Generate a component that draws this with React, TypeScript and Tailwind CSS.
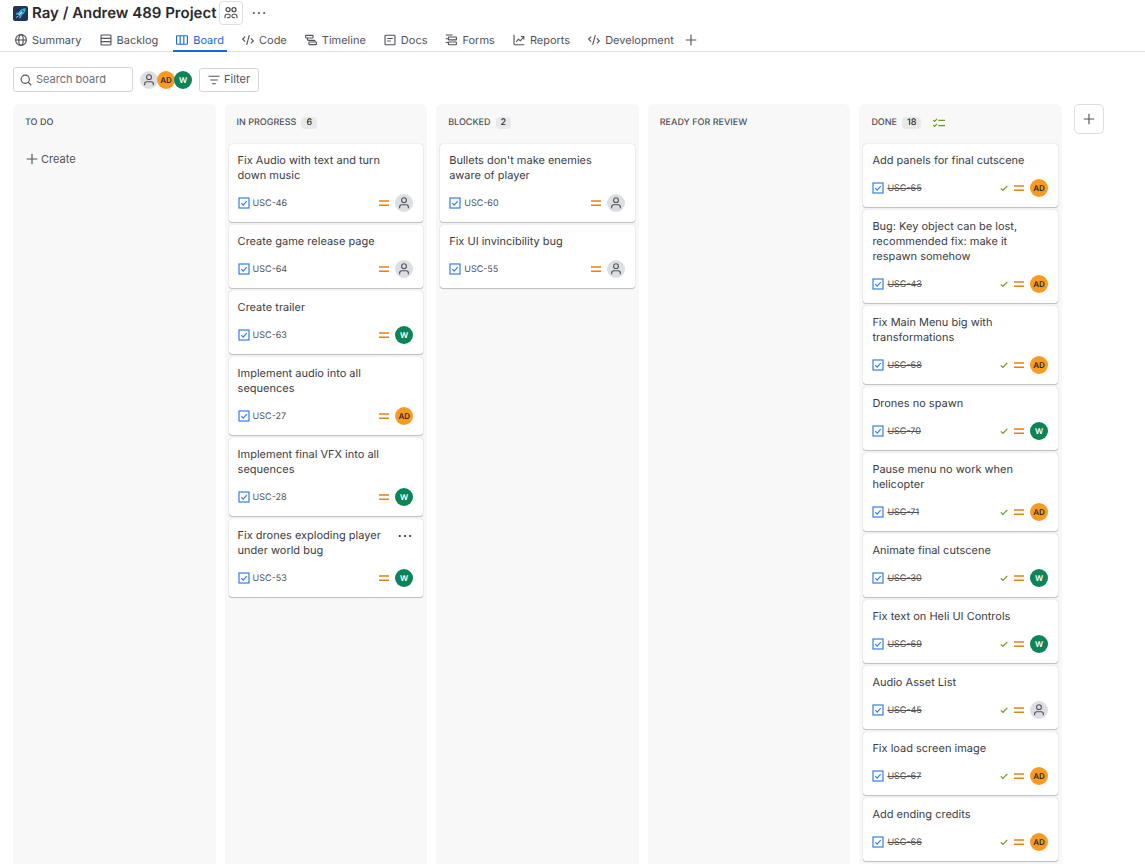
import type { ReactNode } from "react";

type Person = "none" | "AD" | "W";

interface Task {
  title: string;
  id: string;
  who: Person;
  menu?: boolean;
}

interface ColumnData {
  name: string;
  count?: number;
  done?: boolean;
  create?: boolean;
  tasks: Task[];
}

const COLUMNS: ColumnData[] = [
  { name: "TO DO", create: true, tasks: [] },
  {
    name: "IN PROGRESS",
    count: 6,
    tasks: [
      { title: "Fix Audio with text and turn down music", id: "USC-46", who: "none" },
      { title: "Create game release page", id: "USC-64", who: "none" },
      { title: "Create trailer", id: "USC-63", who: "W" },
      { title: "Implement audio into all sequences", id: "USC-27", who: "AD" },
      { title: "Implement final VFX into all sequences", id: "USC-28", who: "W" },
      { title: "Fix drones exploding player under world bug", id: "USC-53", who: "W", menu: true },
    ],
  },
  {
    name: "BLOCKED",
    count: 2,
    tasks: [
      { title: "Bullets don't make enemies aware of player", id: "USC-60", who: "none" },
      { title: "Fix UI invincibility bug", id: "USC-55", who: "none" },
    ],
  },
  { name: "READY FOR REVIEW", tasks: [] },
  {
    name: "DONE",
    count: 18,
    done: true,
    tasks: [
      { title: "Add panels for final cutscene", id: "USC-65", who: "AD" },
      { title: "Bug: Key object can be lost, recommended fix: make it respawn somehow", id: "USC-43", who: "AD" },
      { title: "Fix Main Menu big with transformations", id: "USC-68", who: "AD" },
      { title: "Drones no spawn", id: "USC-70", who: "W" },
      { title: "Pause menu no work when helicopter", id: "USC-71", who: "AD" },
      { title: "Animate final cutscene", id: "USC-30", who: "W" },
      { title: "Fix text on Heli UI Controls", id: "USC-69", who: "W" },
      { title: "Audio Asset List", id: "USC-45", who: "none" },
      { title: "Fix load screen image", id: "USC-67", who: "AD" },
      { title: "Add ending credits", id: "USC-66", who: "AD" },
    ],
  },
];

function Icon({ children, className = "size-3" }: { children: ReactNode; className?: string }) {
  return (
    <svg
      viewBox="0 0 16 16"
      className={`shrink-0 ${className}`}
      fill="none"
      stroke="currentColor"
      strokeWidth="1.5"
      aria-hidden="true"
    >
      {children}
    </svg>
  );
}

const codeIcon = <path d="M4.2 3.5 1 6.8l3.2 3.3M11.8 5.9 15 9.2l-3.2 3.3M9.8 1.5 6.2 14.5" />;

const TABS: { label: string; icon: ReactNode; active?: boolean }[] = [
  {
    label: "Summary",
    icon: (
      <>
        <circle cx="8" cy="8" r="7.2" />
        <ellipse cx="8" cy="8" rx="3" ry="7.2" />
        <path d="M1 8h14" />
      </>
    ),
  },
  {
    label: "Backlog",
    icon: (
      <>
        <rect x="1.4" y="1.4" width="13.2" height="13.2" rx="1" />
        <path d="M1.4 5.8h13.2M1.4 10.2h13.2" />
      </>
    ),
  },
  {
    label: "Board",
    active: true,
    icon: (
      <>
        <rect x="0.8" y="2.4" width="14.4" height="11.2" rx="1" />
        <path d="M5.6 2.5v11M10.4 2.5v11" />
      </>
    ),
  },
  { label: "Code", icon: codeIcon },
  {
    label: "Timeline",
    icon: (
      <>
        <rect x="0.8" y="1.8" width="10" height="3.6" rx="1" />
        <path d="M3.4 5.4v1.8c0 .8.5 1.3 1.3 1.3h7.5c.8 0 1.3.5 1.3 1.3v.6" />
        <rect x="5.2" y="10.6" width="10" height="3.6" rx="1" />
      </>
    ),
  },
  {
    label: "Docs",
    icon: (
      <>
        <rect x="1.4" y="1.6" width="13.2" height="12.8" rx="1" />
        <path d="M4.2 6h7.6M4.2 9.4h4.8" />
      </>
    ),
  },
  {
    label: "Forms",
    icon: (
      <>
        <path d="M1 1.4h9M1 6.4h3M1 11.4h3" />
        <rect x="4.6" y="4" width="10.6" height="3.8" rx="0.6" />
        <rect x="4.6" y="10.6" width="10.6" height="3.8" rx="0.6" />
      </>
    ),
  },
  {
    label: "Reports",
    icon: (
      <>
        <path d="M1.4 1v12.2c0 .7.4 1.1 1.1 1.1H15" />
        <path d="m4.2 10.6 3-3.6 2.6 2 4.2-5M10.4 3.4h4v4" />
      </>
    ),
  },
  { label: "Development", icon: codeIcon },
];

function PersonGlyph() {
  return (
    <Icon>
      <circle cx="8" cy="4.2" r="3.2" />
      <path d="M2.2 15v-1.6c0-1.7 1.2-3 2.9-3h5.8c1.7 0 2.9 1.3 2.9 3V15" />
    </Icon>
  );
}

const AVATAR_STYLES: Record<Person, string> = {
  none: "bg-[#dddee1] text-[#505258]",
  AD: "bg-[#fb9a22] text-[#292a2e]",
  W: "bg-[#0b8458] text-white",
};

function Avatar({ who }: { who: Person }) {
  return (
    <span
      className={`flex size-[18px] shrink-0 items-center justify-center rounded-full text-[8px] font-semibold ${AVATAR_STYLES[who]}`}
    >
      {who === "none" ? <PersonGlyph /> : who}
    </span>
  );
}

function Dots() {
  return (
    <svg viewBox="0 0 16 16" className="size-4" fill="currentColor" aria-hidden="true">
      <circle cx="2.8" cy="8" r="1.1" />
      <circle cx="8" cy="8" r="1.1" />
      <circle cx="13.2" cy="8" r="1.1" />
    </svg>
  );
}

function Plus() {
  return (
    <Icon>
      <path d="M8 1v14M1 8h14" />
    </Icon>
  );
}

function Card({ task, done }: { task: Task; done?: boolean }) {
  return (
    <article className="flex flex-col gap-[11px] rounded-[3px] bg-white pb-[10px] pl-[9px] pr-[10px] pt-[9px] shadow-[0_1px_1px_#1e1f2140,0_0_1px_#1e1f214f]">
      <div className="flex items-start">
        <h3 className="min-w-0 flex-1 pr-1 text-[11px] leading-[15px] text-[#3b3c42]">{task.title}</h3>
        <div className="flex w-4 shrink-0 justify-center">
          {task.menu && (
            <button type="button" aria-label="Card actions" className="text-[#292a2e]">
              <Dots />
            </button>
          )}
        </div>
      </div>
      <div className="flex h-[18px] items-center">
        <svg viewBox="0 0 12 12" className="size-3 shrink-0" fill="none" stroke="#357de8" strokeWidth="1.2" aria-hidden="true">
          <rect x="1" y="1" width="10" height="10" />
          <path d="m3.3 6.2 1.9 1.9 3.5-4" />
        </svg>
        <a
          href="#"
          className={`ml-[3px] pt-px text-[9px] leading-[15px] text-[#505258] ${done ? "line-through" : ""}`}
        >
          {task.id}
        </a>
        <div className="ml-auto flex items-center">
          {done && (
            <svg viewBox="0 0 8 8" className="mr-1.5 size-2" fill="none" stroke="#6a9a23" strokeWidth="1.2" aria-hidden="true">
              <path d="m0.8 4.4 2.1 2.1 4.4-4.7" />
            </svg>
          )}
          <svg viewBox="0 0 10 10" className="mr-1.5 size-2.5" stroke="#e97f17" strokeWidth="1.4" aria-hidden="true">
            <path d="M0 3h10M0 7.2h10" />
          </svg>
          <Avatar who={task.who} />
        </div>
      </div>
    </article>
  );
}

function Column({ column }: { column: ColumnData }) {
  return (
    <section className="min-w-0 flex-1 rounded-t-md bg-[#f8f8f8] px-1">
      <header className="flex h-10 items-center px-2 pb-[3px]">
        <h2 className="text-[9px] font-medium leading-3 text-[#505258]">{column.name}</h2>
        {column.count !== undefined && (
          <span className="ml-[5px] rounded-sm bg-[#e9e9eb] px-[5px] text-[9px] font-medium leading-3 text-[#292a2e]">
            {column.count}
          </span>
        )}
        {column.done && (
          <svg viewBox="0 0 12 10" className="ml-3 h-2.5 w-3" fill="none" stroke="#6a9a23" strokeWidth="1.2" aria-label="Done column">
            <path d="m0.4 2.2 1.2 1.2L4 0.8M0.4 7.2l1.2 1.2L4 5.8M5.4 2.4H12M5.4 7.6H12" />
          </svg>
        )}
      </header>
      {column.create && (
        <button type="button" className="flex h-[30px] items-center gap-[3px] px-[9px] text-[11px] text-[#505258]">
          <Plus />
          Create
        </button>
      )}
      <div className="flex flex-col gap-[3px]">
        {column.tasks.map((task) => (
          <Card key={task.id} task={task} done={column.done} />
        ))}
      </div>
    </section>
  );
}

export default function App() {
  return (
    <div className="flex h-screen flex-col overflow-hidden bg-white font-['Inter','Liberation_Sans',sans-serif] text-[#292a2e] [text-rendering:geometricPrecision]">
      <header className="shrink-0 border-b border-[#dddee1]">
        <div className="flex h-[26px] items-center pl-[13px]">
          <svg viewBox="0 0 15 15" className="size-[15px]" aria-hidden="true">
            <rect width="15" height="15" rx="2" fill="#223558" />
            <path d="M12.8 2.2c-3 0-5.3 1.3-7 4.1L3.4 7l-.8 1.8 2.2-.2 1.7 1.7-.3 2.3 1.8-1 .6-2.3c2.8-1.8 4-4 4.2-7.1Z" fill="#36b4dc" />
            <path d="m6 8.8 4.6-4.6" stroke="#dff5fc" strokeWidth="1" />
            <circle cx="9.8" cy="5.2" r="1.1" fill="#1d5f92" />
            <path d="m4.7 9.7-2.2 2.7 2.9-1.9Z" fill="#c9e8ef" />
          </svg>
          <h1 className="ml-1 text-[15px] font-semibold leading-5">Ray / Andrew 489 Project</h1>
          <button
            type="button"
            aria-label="Team"
            className="ml-[3px] flex size-6 items-center justify-center rounded border border-[#dddee1] text-[#505258]"
          >
            <Icon className="size-3.5">
              <circle cx="4.6" cy="4.2" r="2.3" />
              <circle cx="11.4" cy="4.2" r="2.3" />
              <path
                d="M1.2 14v-2.2c0-1.400 1-2.400 2.300-2.400h1.600c1.200 0 1.900.8 1.900 1.900 0 1.200-.8 2-2 2H3.600M14.800 14v-2.200c0-1.400-1-2.400-2.300-2.400h-1.600c-1.200 0-1.900.8-1.900 1.900 0 1.200.8 2 2 2h1.400"
                strokeWidth="1.3"
              />
            </Icon>
          </button>
          <button type="button" aria-label="More actions" className="ml-2 text-[#505258]">
            <Dots />
          </button>
        </div>
        <nav className="-mb-px flex h-[26px] items-stretch gap-3 pl-3" aria-label="Project views">
          {TABS.map((tab) => (
            <a
              key={tab.label}
              href="#"
              aria-current={tab.active ? "page" : undefined}
              className={`flex items-center gap-[5px] border-b-2 px-[3px] pt-1 text-[11px] leading-4 ${
                tab.active ? "border-[#1868db] text-[#1868db]" : "border-transparent text-[#505258]"
              }`}
            >
              <Icon>{tab.icon}</Icon>
              {tab.label}
            </a>
          ))}
          <button type="button" aria-label="Add view" className="-ml-1 flex items-center pt-0.5 text-[#505258]">
            <Plus />
          </button>
        </nav>
      </header>

      <div className="flex shrink-0 items-center px-[13px] pb-3 pt-[15px]">
        <label className="flex h-[25px] w-[120px] items-center gap-1 rounded-[3px] border border-[#d5d6d9] px-1.5 text-[#505258]">
          <Icon>
            <circle cx="7" cy="7" r="5.5" />
            <path d="m11 11 4 4" />
          </Icon>
          <input
            type="search"
            aria-label="Search board"
            placeholder="Search board"
            className="min-w-0 flex-1 bg-transparent text-[11px] outline-none placeholder:text-[#6b6e76]"
          />
        </label>
        <div className="ml-[7px] flex items-center -space-x-px">
          <Avatar who="none" />
          <Avatar who="AD" />
          <Avatar who="W" />
        </div>
        <button
          type="button"
          className="ml-[7px] flex h-6 items-center gap-1 rounded-[3px] border border-[#d5d6d9] px-2 text-[11px] text-[#505258]"
        >
          <Icon>
            <path d="M0.5 3h15M3 8h10M5.5 13h5" />
          </Icon>
          Filter
        </button>
      </div>

      <main className="flex min-h-0 flex-1 pl-[13px] pr-[41px]">
        <div className="flex min-w-0 flex-1 gap-[9px]">
          {COLUMNS.map((column) => (
            <Column key={column.name} column={column} />
          ))}
        </div>
        <button
          type="button"
          aria-label="Add column"
          className="ml-3 flex size-[30px] shrink-0 items-center justify-center rounded-[5px] border border-[#dddee1] text-[#505258]"
        >
          <Plus />
        </button>
      </main>
    </div>
  );
}
